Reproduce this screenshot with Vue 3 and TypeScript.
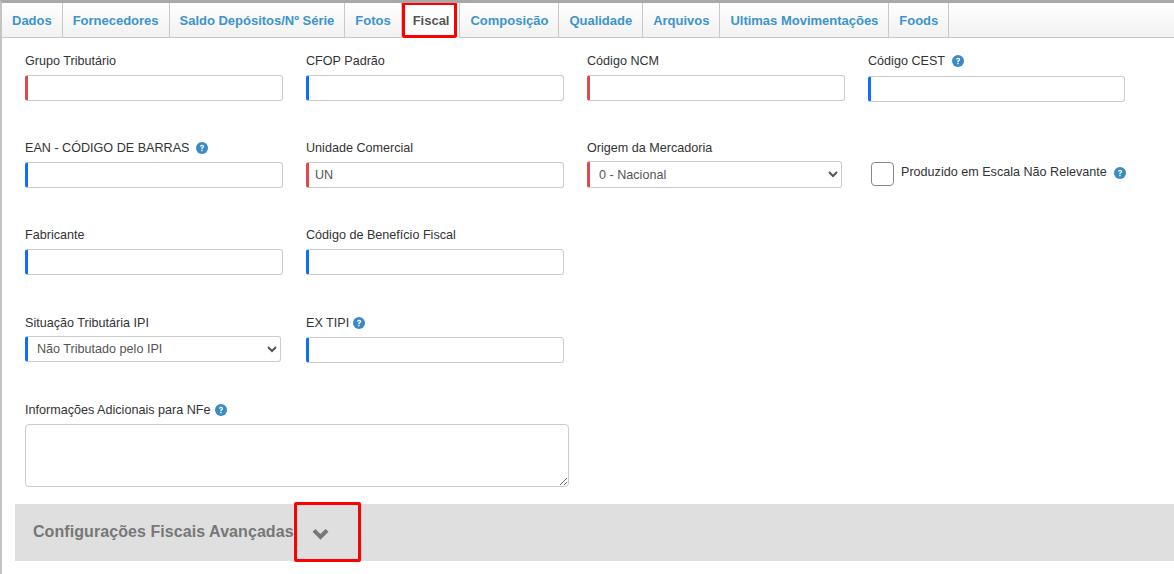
<script setup lang="ts">
const tabs = ['Dados','Fornecedores','Saldo Depósitos/Nº Série','Fotos','Fiscal','Composição','Qualidade','Arquivos','Ultimas Movimentações','Foods']
</script>

<template>
  <div class="page">
    <nav class="tabs">
      <a v-for="t in tabs" :key="t" class="tab" :class="{ active: t === 'Fiscal' }">{{ t }}</a>
    </nav>
    <div class="form">
      <div class="row">
        <div class="field"><label>Grupo Tributário</label><input class="ctl req" /></div>
        <div class="field"><label>CFOP Padrão</label><input class="ctl opt" /></div>
        <div class="field"><label>Código NCM</label><input class="ctl req" /></div>
        <div class="field low"><label>Código CEST <svg class="help gap" viewBox="0 0 24 24"><use href="#q" /></svg></label><input class="ctl opt" /></div>
      </div>
      <div class="row">
        <div class="field"><label>EAN - CÓDIGO DE BARRAS <svg class="help gap" viewBox="0 0 24 24"><use href="#q" /></svg></label><input class="ctl opt" /></div>
        <div class="field"><label>Unidade Comercial</label><input class="ctl req" value="UN" /></div>
        <div class="field origin"><label>Origem da Mercadoria</label>
          <select class="ctl req sel narrow"><option>0 - Nacional</option></select>
        </div>
        <div class="check">
          <span class="box"></span>
          <span class="check-label">Produzido em Escala Não Relevante</span>
          <svg class="help" viewBox="0 0 24 24"><use href="#q" /></svg>
        </div>
      </div>
      <div class="row">
        <div class="field"><label>Fabricante</label><input class="ctl opt" /></div>
        <div class="field"><label>Código de Benefício Fiscal</label><input class="ctl opt" /></div>
      </div>
      <div class="row">
        <div class="field drop"><label>Situação Tributária IPI</label>
          <select class="ctl opt sel narrow2"><option>Não Tributado pelo IPI</option></select>
        </div>
        <div class="field drop low"><label>EX TIPI <svg class="help" viewBox="0 0 24 24"><use href="#q" /></svg></label><input class="ctl opt" /></div>
      </div>
      <div class="field notes">
        <label>Informações Adicionais para NFe <svg class="help" viewBox="0 0 24 24"><use href="#q" /></svg></label>
        <textarea class="area"></textarea>
      </div>
    </div>
    <section class="advanced">
      <h3>Configurações Fiscais Avançadas</h3>
      <svg class="chev" viewBox="0 0 16 12"><path d="M0.500 3.500 3.200 0.800 8 5.600 12.800 0.800 15.500 3.500 8 11Z" /></svg>
      <span class="mark mark-chev"></span>
    </section>
    <span class="mark mark-tab"></span>
    <svg width="0" height="0" class="defs">
      <symbol id="q" viewBox="0 0 24 24">
        <circle cx="12" cy="12" r="12" fill="#3a8ac4" />
        <path d="M8 9.200c.3-2.300 2-3.600 4.200-3.600 2.400 0 4.100 1.400 4.100 3.400 0 1.600-.9 2.400-2 3.100-.9.6-1.200.9-1.200 1.900h-2.500c0-1.800.5-2.600 1.700-3.400.9-.6 1.400-1 1.400-1.600 0-.7-.6-1.200-1.500-1.200-1 0-1.600.6-1.800 1.600ZM10.500 15.500h2.700v2.800h-2.700Z" fill="#fff" />
      </symbol>
    </svg>
  </div>
</template>

<style>
html, body { margin: 0; background: #fff; }
</style>

<style scoped>
.page {
  position: relative;
  width: 1174px;
  height: 574px;
  overflow: hidden;
  box-sizing: border-box;
  border-top: 3px solid #a8a8a8;
  border-left: 2px solid #c4c4c4;
  font-family: "Liberation Sans", Arial, sans-serif;
  color: #333;
  background: #fff;
}
.defs { position: absolute; }
.tabs {
  display: flex;
  height: 35px;
  box-sizing: border-box;
  border-bottom: 1px solid #c8c8c8;
  background: linear-gradient(#fff, #f1f1f1);
}
.tab {
  box-sizing: border-box;
  padding: 0 10px;
  line-height: 35px;
  font-size: 13px;
  font-weight: 700;
  letter-spacing: -0.01px;
  color: #3c94cc;
  border-right: 1px solid #c8c8c8;
}
.tab.active {
  color: #555;
  background: #fff;
  height: 35px;
  padding: 0 10px 0 11px;
}
.form { padding: 15px 0 0 23px; }
.row {
  display: grid;
  grid-template-columns: repeat(4, 281px);
  height: 87px;
}
.field { display: flex; flex-direction: column; align-items: flex-start; }
label {
  font-size: 12.6px;
  line-height: 16px;
  height: 16px;
  margin-bottom: 6px;
  color: #333;
  display: flex;
  align-items: center;
  gap: 4px;
}
.low label { margin-bottom: 7px; }
.origin label { margin-bottom: 5px; }
.drop { padding-top: 1px; }
.drop label { margin-bottom: 5px; }
.drop.low label { margin-bottom: 6px; }
.help { width: 12px; height: 12px; flex: none; }
.help.gap { margin-left: 3px; }
.ctl {
  box-sizing: border-box;
  width: 258px;
  height: 26px;
  margin: 0;
  padding: 0 8px 0 6px;
  background: #fff;
  border: 1px solid #ccc;
  border-radius: 3px;
  outline: none;
  font-family: inherit;
  font-size: 12.6px;
  color: #555;
}
.low .ctl { width: 257px; }
.drop.low .ctl { width: 258px; }
.req { border-left: 3px solid #e2474f; }
.opt { border-left: 3px solid #0d6efd; }
.sel { height: 27px; padding: 0 0 0 5px; }
.narrow { width: 255px; }
.narrow2 { width: 256px; height: 26px; }
.check {
  display: flex;
  align-items: center;
  gap: 7px;
  height: 24px;
  margin: 22px 0 0 3px;
}
.box {
  box-sizing: border-box;
  width: 23px;
  height: 24px;
  border: 1px solid #888;
  border-radius: 4px;
  background: #fff;
}
.check-label { font-size: 12.6px; margin-top: -5px; }
.check .help { margin-top: -3px; }
.notes { margin-top: 1px; }
.area {
  box-sizing: border-box;
  display: block;
  width: 544px;
  height: 63px;
  margin: 0;
  border: 1px solid #ccc;
  border-radius: 4px;
  outline: none;
}
.advanced {
  position: absolute;
  left: 13px;
  right: 0;
  top: 501px;
  height: 57px;
  display: flex;
  align-items: center;
  padding-left: 18px;
  background: #dfdfdf;
}
.advanced h3 {
  margin: 0 0 1px;
  font-size: 16px;
  font-weight: 700;
  color: #777;
  letter-spacing: 0.07px;
}
.chev { width: 17px; height: 13px; margin: 4px 0 0 18px; fill: #777; }
.mark {
  position: absolute;
  box-sizing: border-box;
  border: 3px solid #f00;
  border-radius: 2px;
  pointer-events: none;
}
.mark-tab { left: 400px; top: -1px; width: 55px; height: 36px; }
.mark-chev { left: 279px; top: -2px; width: 67px; height: 60px; }
</style>
